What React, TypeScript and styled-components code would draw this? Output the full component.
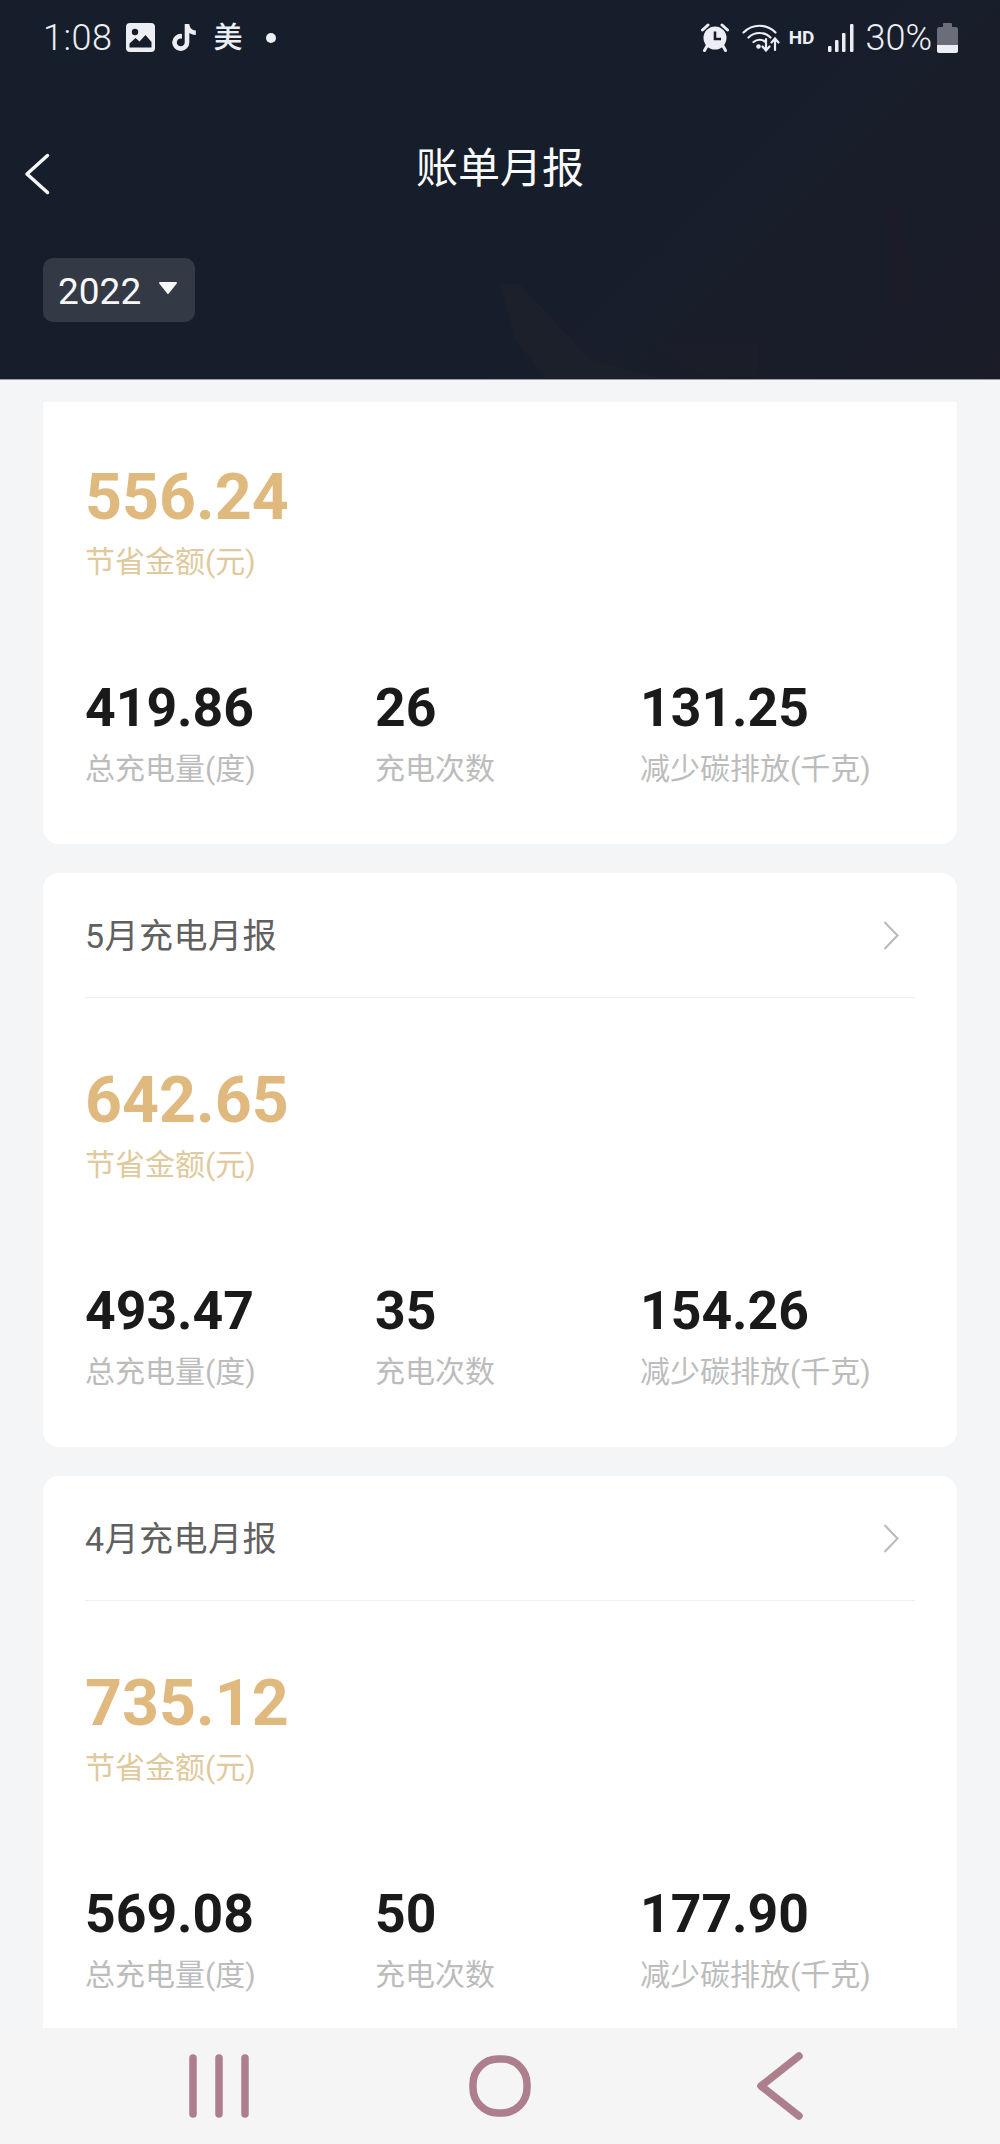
import React from 'react'
import { FaTiktok } from 'react-icons/fa'
import styled, { createGlobalStyle } from 'styled-components'

const FONT_STACK = `Roboto, "Noto Sans CJK SC", sans-serif`

interface Report {
  month?: string
  saved: string
  power: string
  times: string
  carbon: string
}

const REPORTS: Report[] = [
  { saved: '556.24', power: '419.86', times: '26', carbon: '131.25' },
  { month: '5月充电月报', saved: '642.65', power: '493.47', times: '35', carbon: '154.26' },
  { month: '4月充电月报', saved: '735.12', power: '569.08', times: '50', carbon: '177.90' }
]

const App = () => {
  return (
    <>
      <GlobalStyle />
      <Page>
        <Header>
          <HeaderArt viewBox="0 0 1000 380" aria-hidden="true">
            <polygon points="500,285 520,285 590,360 660,379 545,379 515,340" fill="#1c202b" />
            <polygon points="655,345 760,345 760,375 700,375" fill="#1b1e29" />
            <polygon points="885,210 905,205 912,300 890,310" fill="#1c1c28" />
          </HeaderArt>
          <StatusBar>
            <StatusGroup>
              <Time>1:08</Time>
              <GalleryIcon viewBox="0 0 29 29">
                <rect width="29" height="29" rx="4" fill="#eceef3" />
                <circle cx="9" cy="9" r="3.2" fill="#171e2b" />
                <path d="M3.5 24.5v-4l6-5.5 4 3.5 6-6.5 6 7v5.5z" fill="#171e2b" />
              </GalleryIcon>
              <TiktokIcon />
              <MeiText>美</MeiText>
              <NotifyDot />
            </StatusGroup>
            <StatusGroup>
              <AlarmIcon viewBox="0 0 28 29">
                <path d="M1.5 7 7 2M26.5 7 21 2" stroke="#eceef3" strokeWidth="3" strokeLinecap="round" />
                <path d="M6 23 3.5 27.5M22 23l2.5 4.5" stroke="#eceef3" strokeWidth="3" strokeLinecap="round" />
                <circle cx="14" cy="15" r="11.5" fill="#eceef3" />
                <path d="M14 8.5V16h6" fill="none" stroke="#171e2b" strokeWidth="2.6" />
              </AlarmIcon>
              <WifiIcon viewBox="0 0 38 29">
                <g fill="none" stroke="#eceef3" strokeWidth="2.2" strokeLinecap="round">
                  <path d="M1.5 9.5C10.5.5 24.5.5 33.5 9.5" />
                  <path d="M6.5 14.5c6-6 16-6 22 0" />
                  <path d="M11.5 19c3.500-3 8.500-3 12 0" />
                  <path d="M24 16v11M20.500 23.500 24 27.500l3.500-4" />
                  <path d="M33 27V16M29.500 19.500 33 15.500l3.500 4" />
                </g>
                <circle cx="16.500" cy="23.500" r="2.300" fill="#eceef3" />
              </WifiIcon>
              <HdLabel>HD</HdLabel>
              <SignalIcon viewBox="0 0 26 28">
                <rect x="0" y="22" width="3.500" height="6" rx="1" fill="#eceef3" />
                <rect x="7" y="16" width="3.500" height="12" rx="1" fill="#eceef3" />
                <rect x="14" y="9" width="3.500" height="19" rx="1" fill="#eceef3" />
                <rect x="22" y="0" width="3.500" height="28" rx="1" fill="#eceef3" />
              </SignalIcon>
              <BatteryText>30%</BatteryText>
              <BatteryIcon viewBox="0 0 21 30">
                <path d="M7 0h7a1 1 0 0 1 1 1v3H6V1a1 1 0 0 1 1-1z" fill="#6b6e78" />
                <rect y="4" width="21" height="26" rx="2.500" fill="#6b6e78" />
                <path d="M0 22h21v5.500a2.500 2.500 0 0 1-2.500 2.500h-16A2.500 2.500 0 0 1 0 27.500z" fill="#eceef3" />
              </BatteryIcon>
            </StatusGroup>
          </StatusBar>
          <TitleBar>
            <BackIcon viewBox="0 0 26 42">
              <path d="M23.500 2.500 3 21l20.500 18.500" />
            </BackIcon>
            <Title>账单月报</Title>
          </TitleBar>
          <YearPicker>
            <YearText>2022</YearText>
            <Caret viewBox="0 0 20 14">
              <path d="M2 2h16l-8 10z" />
            </Caret>
          </YearPicker>
        </Header>
        <ReportList>
          {REPORTS.map((report) => (
            <ReportCard key={report.saved} $headless={!report.month}>
              {report.month && (
                <CardHeader>
                  <CardTitle>{report.month}</CardTitle>
                  <ChevronIcon viewBox="0 0 16 29">
                    <path d="M1.500 1 14.500 14.500 1.500 28" />
                  </ChevronIcon>
                </CardHeader>
              )}
              <SavedValue>{report.saved}</SavedValue>
              <SavedLabel>节省金额(元)</SavedLabel>
              <StatsRow>
                <div>
                  <StatValue>{report.power}</StatValue>
                  <StatLabel>总充电量(度)</StatLabel>
                </div>
                <div>
                  <StatValue>{report.times}</StatValue>
                  <StatLabel>充电次数</StatLabel>
                </div>
                <div>
                  <StatValue>{report.carbon}</StatValue>
                  <StatLabel>减少碳排放(千克)</StatLabel>
                </div>
              </StatsRow>
            </ReportCard>
          ))}
        </ReportList>
        <NavBar>
          <NavSlot>
            <NavIcon viewBox="0 0 64 64" width="64" height="64">
              <path d="M5 4v56M31 4v56M57 4v56" />
            </NavIcon>
          </NavSlot>
          <NavSlot>
            <NavIcon viewBox="0 0 64 64" width="64" height="64">
              <rect x="5" y="5" width="54" height="54" rx="25" />
            </NavIcon>
          </NavSlot>
          <NavSlot>
            <NavIcon viewBox="0 0 46 68" width="46" height="68">
              <path d="M42 4 4 34l38 30" />
            </NavIcon>
          </NavSlot>
        </NavBar>
      </Page>
    </>
  )
}

const GlobalStyle = createGlobalStyle`
  html, body {
    margin: 0;
    padding: 0;
    background: #f3f5f7;
  }
`

const Page = styled.div`
  display: flex;
  flex-direction: column;
  width: 1000px;
  height: 2144px;
  overflow: hidden;
  background: #f3f5f7;
  font-family: ${FONT_STACK};
`

const Header = styled.header`
  position: relative;
  flex: none;
  box-sizing: border-box;
  height: 380px;
  background: linear-gradient(135deg, #171e2b 62%, #1b1c28 100%);
  border-bottom: 1px solid #9a9ca3;
  overflow: hidden;
`

const HeaderArt = styled.svg`
  position: absolute;
  inset: 0;
  width: 100%;
  height: 100%;
`

const StatusBar = styled.div`
  position: relative;
  display: flex;
  align-items: center;
  justify-content: space-between;
  height: 75px;
  padding: 0 42px 0 43px;
`

const StatusGroup = styled.div`
  display: flex;
  align-items: center;
`

const Time = styled.span`
  font-size: 36px;
  font-weight: 300;
  letter-spacing: 0.5px;
  line-height: 40px;
  color: #eceef3;
  margin-right: 14px;
`

const GalleryIcon = styled.svg`
  width: 29px;
  height: 29px;
  margin-right: 17px;
`

const TiktokIcon = styled(FaTiktok)`
  width: 24px;
  height: 27px;
  color: #eceef3;
  margin-right: 17px;
`

const MeiText = styled.span`
  font-size: 29px;
  font-weight: 500;
  line-height: 40px;
  color: #eceef3;
  margin-right: 24px;
`

const NotifyDot = styled.span`
  width: 10px;
  height: 10px;
  border-radius: 50%;
  background: #eceef3;
`

const AlarmIcon = styled.svg`
  width: 28px;
  height: 29px;
  margin-right: 13px;
`

const WifiIcon = styled.svg`
  width: 38px;
  height: 29px;
  margin-right: 9px;
`

const HdLabel = styled.span`
  font-size: 19px;
  font-weight: 700;
  line-height: 24px;
  color: #eceef3;
  margin-right: 14px;
`

const SignalIcon = styled.svg`
  width: 26px;
  height: 28px;
  margin-right: 11px;
`

const BatteryText = styled.span`
  font-size: 36px;
  font-weight: 300;
  line-height: 40px;
  color: #eceef3;
  margin-right: 5px;
`

const BatteryIcon = styled.svg`
  width: 21px;
  height: 30px;
`

const TitleBar = styled.div`
  position: relative;
  display: flex;
  align-items: center;
  justify-content: center;
  height: 90px;
  margin-top: 49px;
`

const BackIcon = styled.svg`
  position: absolute;
  left: 24px;
  top: 29px;
  width: 26px;
  height: 42px;

  path {
    fill: none;
    stroke: #f5f6f8;
    stroke-width: 3.5;
    stroke-linecap: round;
    stroke-linejoin: round;
  }
`

const Title = styled.h1`
  margin: 0;
  font-size: 42px;
  font-weight: 400;
  line-height: 56px;
  color: #fafafa;
`

const YearPicker = styled.div`
  position: relative;
  display: inline-flex;
  align-items: center;
  box-sizing: border-box;
  width: 152px;
  height: 64px;
  margin: 44px 0 0 43px;
  padding-left: 15px;
  border-radius: 10px;
  background: #343946;
`

const YearText = styled.span`
  padding-top: 3px;
  font-size: 37px;
  line-height: 44px;
  color: #f7f7f8;
`

const Caret = styled.svg`
  width: 20px;
  height: 14px;
  margin-left: 17px;
  margin-top: -4px;

  path {
    fill: #f7f7f8;
    stroke: #f7f7f8;
    stroke-width: 2;
    stroke-linejoin: round;
  }
`

const ReportList = styled.main`
  flex: 1;
  min-height: 0;
  display: flex;
  flex-direction: column;
  gap: 29px;
  padding: 22px 43px 0;
  overflow: hidden;
`

const ReportCard = styled.section<{ $headless: boolean }>`
  flex: none;
  box-sizing: border-box;
  padding: ${({ $headless }) => ($headless ? '63px' : '0')} 42px 55px;
  background: #ffffff;
  border-radius: ${({ $headless }) => ($headless ? '0 0 16px 16px' : '16px')};
`

const CardHeader = styled.div`
  display: flex;
  align-items: center;
  justify-content: space-between;
  height: 124px;
  margin-bottom: 70px;
  padding-right: 16px;
  border-bottom: 1px solid #eeeff1;
`

const CardTitle = styled.h2`
  margin: 0;
  padding-top: 2px;
  font-size: 34px;
  font-weight: 400;
  letter-spacing: 0.5px;
  line-height: 48px;
  color: #606060;
`

const ChevronIcon = styled.svg`
  width: 16px;
  height: 29px;

  path {
    fill: none;
    stroke: #b9b9b9;
    stroke-width: 2;
  }
`

const SavedValue = styled.div`
  font-size: 64.5px;
  font-weight: 700;
  line-height: 64px;
  color: #e0b97f;
`

const SavedLabel = styled.div`
  margin-top: 13px;
  font-size: 30px;
  line-height: 40px;
  color: #e0c99c;
`

const StatsRow = styled.div`
  display: grid;
  grid-template-columns: 290px 265px 1fr;
  margin-top: 99px;
`

const StatValue = styled.div`
  font-size: 53.5px;
  font-weight: 700;
  line-height: 54px;
  color: #1a1a1a;
`

const StatLabel = styled.div`
  margin-top: 14px;
  font-size: 30px;
  line-height: 40px;
  color: #bcbcbc;
  white-space: nowrap;
`

const NavBar = styled.nav`
  flex: none;
  display: grid;
  grid-template-columns: repeat(3, 280px);
  align-items: center;
  justify-items: center;
  height: 116px;
  padding: 0 80px;
  background: #f5f5f5;
`

const NavSlot = styled.div`
  display: flex;
`

const NavIcon = styled.svg`
  fill: none;
  stroke: #ad7f8c;
  stroke-width: 7.5;
  stroke-linecap: round;
  stroke-linejoin: round;
`

export default App
